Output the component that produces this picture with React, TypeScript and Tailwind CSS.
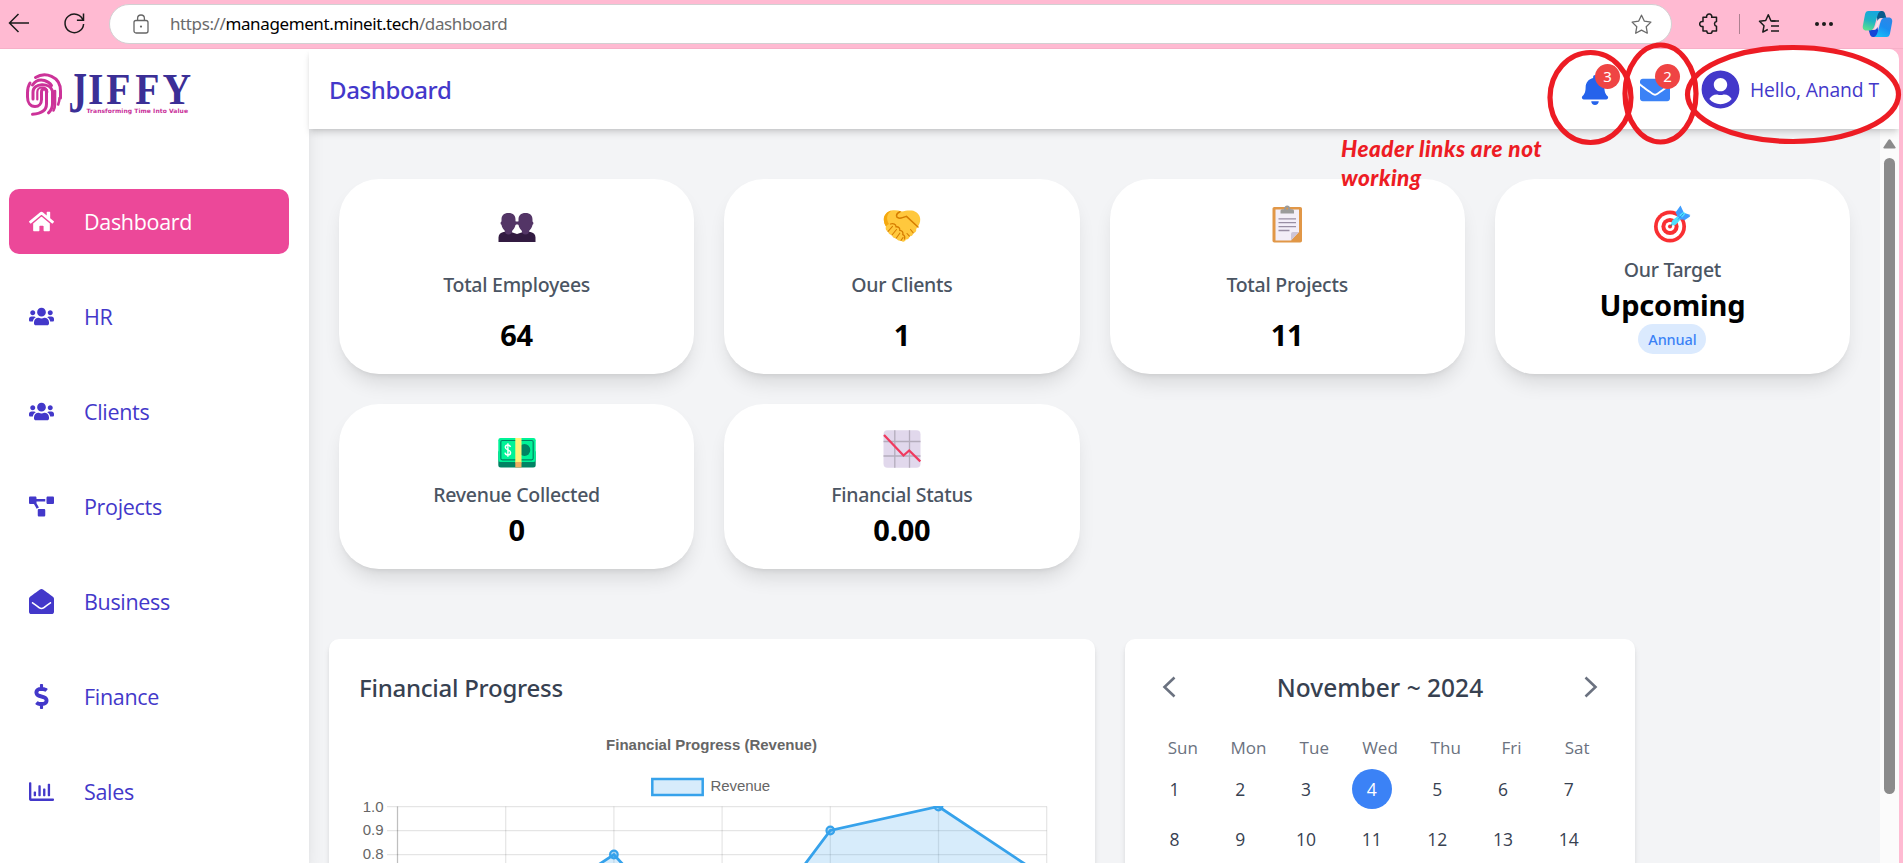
import type { ReactNode } from "react";
import {
  FaBell,
  FaDollarSign,
  FaEnvelope,
  FaEnvelopeOpen,
  FaHome,
  FaProjectDiagram,
  FaRegChartBar,
  FaUserCircle,
  FaUsers,
} from "react-icons/fa";

/* ---------- Browser toolbar ---------- */

function BrowserBar() {
  return (
    <div className="flex h-[49px] shrink-0 items-start border-b border-[#f7b0c8] bg-[#ffbad2]">
      <svg className="ml-[8px] mt-[13px] size-[22px]" viewBox="0 0 22 22" fill="none" stroke="#1b1b1b" strokeWidth="1.5">
        <path d="M21 10H2M10.5 1 1.5 10l9 9" />
      </svg>
      <svg className="ml-[33px] mt-[12px] size-[23px]" viewBox="0 0 23 23" fill="none" stroke="#1b1b1b" strokeWidth="1.5">
        <path d="M20.2 8.6A9.3 9.3 0 1 0 20.6 12" />
        <path d="M20.5 1.5v6.7h-6.6" />
      </svg>
      <div className="ml-[23px] mt-[4px] flex h-[40px] w-[1563px] items-center rounded-full border border-[#d2d0d2] bg-white">
        <svg className="ml-[23px] h-[20px] w-[16px]" viewBox="0 0 16 20" fill="none" stroke="#666" strokeWidth="1.3">
          <rect x="1" y="6.5" width="14" height="12.5" rx="2" />
          <path d="M4.6 6.5V4.4a3.4 3.4 0 0 1 6.8 0v2.1" />
          <circle cx="8" cy="12.6" r="1.1" fill="#666" stroke="none" />
        </svg>
        <p className="ml-[21px] text-[17px] leading-6 tracking-[-0.39px] text-[#6b6b6b]">
          https://<span className="text-black">management.mineit.tech</span>/dashboard
        </p>
        <svg className="ml-auto mr-[19px] size-[21px]" viewBox="0 0 21 21" fill="none" stroke="#6a6a6a" strokeWidth="1.3" strokeLinejoin="round">
          <path d="m10.5 1.2 2.9 6 6.5.9-4.7 4.6 1.1 6.5-5.8-3.1-5.8 3.1 1.1-6.5L1.1 8.1l6.5-.9z" />
        </svg>
      </div>
      <svg className="ml-[27px] mt-[13px] size-[21px]" viewBox="0 0 21 21" fill="none" stroke="#1b1b1b" strokeWidth="1.5" strokeLinejoin="round">
        <path d="M4 4.3h3.7a2.6 2.6 0 1 1 5 0H17.5v4.1a2.5 2.5 0 0 0 0 4.9v4.6h-4.3a2.7 2.7 0 0 1-5.4 0H4v-4.4a2.6 2.6 0 1 1 0-5z" />
      </svg>
      <div className="ml-[19px] mt-[14px] h-[20px] w-px bg-[#ad8090]" />
      <svg className="ml-[18px] mt-[13px] size-[22px]" viewBox="0 0 22 22" fill="none" stroke="#1b1b1b" strokeWidth="1.5" strokeLinejoin="round">
        <path d="M17.5 8H13L10.3 1.7 7.7 7.5l-6.2.8 4.5 4.5-1.2 6.3 5-2.6" />
        <path d="M13.5 8H21M13 13h8M13 18h8" />
      </svg>
      <div className="ml-[35px] mt-[22px] flex gap-[3.5px]">
        <span className="size-[3.5px] rounded-full bg-[#1b1b1b]" />
        <span className="size-[3.5px] rounded-full bg-[#1b1b1b]" />
        <span className="size-[3.5px] rounded-full bg-[#1b1b1b]" />
      </div>
      <svg className="ml-[29px] mt-[10px] h-[28px] w-[31px]" viewBox="0 0 31 28">
        <defs>
          <linearGradient id="cpL" x1="0.6" y1="0" x2="0.3" y2="1">
            <stop offset="0" stopColor="#16a6e0" />
            <stop offset="0.5" stopColor="#1fb3c4" />
            <stop offset="1" stopColor="#5be08e" />
          </linearGradient>
          <linearGradient id="cpR" x1="0.8" y1="0" x2="0.3" y2="1">
            <stop offset="0" stopColor="#2f86e6" />
            <stop offset="0.5" stopColor="#1b8df0" />
            <stop offset="1" stopColor="#18bdf8" />
          </linearGradient>
        </defs>
        <path d="M17 6.5h3L14.5 21h-3z" fill="#fbdfe9" />
        <path d="M14 1h6c2 0 2.7 1.5 3.3 3.5l1 3.5h-5c-2 0-3 1-3.8 3z" fill="#0b5a8c" />
        <path d="M17 27h-6c-2 0-2.7-1.5-3.3-3.5L6.7 20h5c2 0 3-1 3.8-3z" fill="#1546d6" />
        <path d="M6.5 1H19c-2 .5-2.9 2.5-3.5 4.5L12.5 16c-1 3.2-2.5 4.5-5 4.5h-3C1 20.5.3 18 1 15L3 4.5C3.5 2 4.5 1 6.5 1z" fill="url(#cpL)" />
        <path d="M24.5 27H12c2-.5 2.9-2.5 3.5-4.5L18.5 12c1-3.2 2.5-4.5 5-4.5h3c3.5 0 4.2 2.5 3.5 5.5L28 23.5c-.5 2.5-1.5 3.5-3.5 3.5z" fill="url(#cpR)" />
      </svg>
    </div>
  );
}

/* ---------- Sidebar ---------- */

function Logo() {
  return (
    <svg className="ml-[24px] mt-[1px] h-[80px] w-[170px] shrink-0 overflow-visible" viewBox="24 50 170 80">
      <g fill="none" stroke="#cc3399" strokeWidth="3" strokeLinecap="round">
        <path d="M35.5 77.5C45 71.5 60.5 76 60.5 91v7" />
        <path d="M30 83c-2 3-2.5 6-2.5 10v4c0 5 2.5 9.5 7.5 9.5 4 0 6.5-3 6.5-7V92c0-4 5-4 5 0v12c0 5-3.5 9.5-14 10.3" />
        <path d="M32.5 85c3-4.5 8-5.5 12-4.5 3 .8 5.5 2.5 7 5" />
        <path d="M33 99v-7c0-9 17-10 19.5-1V104c0 3.5-1.5 6.5-4 8.8" />
        <path d="M37.3 99.5V92c0-6 10-6 10 0" strokeWidth="2.2" />
        <path d="M55 91v13.5c0 2.5-.5 4-1.5 6M59.5 98c0 2.5-.5 4.5-1.3 6.500" strokeWidth="2.6" />
      </g>
      <g fill="#3b2f96" className="font-['Liberation_Serif',serif] font-bold">
        <text transform="translate(68.5 112) scale(0.66 1)" fontSize="56">
          J
        </text>
        <text transform="scale(0.88 1)" x="99.9 120.7 153.6 184.6" y="104.5" fontSize="45">
          IFFY
        </text>
      </g>
      <text
        x="86.5"
        y="113.2"
        fontSize="6"
        textLength="101.5"
        fill="#c9309a"
        className="font-['DejaVu_Sans',sans-serif] font-bold"
      >
        Transforming Time Into Value
      </text>
    </svg>
  );
}

const NAV: { label: string; icon: ReactNode; active?: boolean }[] = [
  { label: "Dashboard", icon: <FaHome size={25} />, active: true },
  { label: "HR", icon: <FaUsers size={25} /> },
  { label: "Clients", icon: <FaUsers size={25} /> },
  { label: "Projects", icon: <FaProjectDiagram size={25} /> },
  { label: "Business", icon: <FaEnvelopeOpen size={25} /> },
  { label: "Finance", icon: <FaDollarSign size={25} /> },
  { label: "Sales", icon: <FaRegChartBar size={25} /> },
];

function Sidebar() {
  return (
    <aside className="z-10 flex w-[309px] shrink-0 flex-col bg-white shadow-[0_12px_19px_-4px_rgba(0,0,0,0.12),0_5px_8px_-5px_rgba(0,0,0,0.1)]">
      <Logo />
      <nav className="ml-[9px] mt-[59px] flex w-[280px] flex-col gap-[30px]">
        {NAV.map((n) => (
          <a
            key={n.label}
            className={
              n.active
                ? "flex h-[65px] items-center gap-[30px] rounded-[10px] bg-[#ec4899] pl-[20px] text-white"
                : "flex h-[65px] items-center gap-[30px] rounded-[10px] pl-[20px] text-[#4338ca]"
            }
          >
            {n.icon}
            <span className="font-['Open_Sans',sans-serif] text-[21.5px] leading-[30px] tracking-[-0.32px]">{n.label}</span>
          </a>
        ))}
      </nav>
    </aside>
  );
}

/* ---------- Header ---------- */

function Badge({ children }: { children: ReactNode }) {
  return (
    <span className="absolute -top-[10.5px] left-[15px] flex size-[25px] items-center justify-center rounded-full bg-[#ef4444] text-[15px] leading-none text-white">
      {children}
    </span>
  );
}

function Header() {
  return (
    <header className="z-20 flex h-[80px] shrink-0 items-center rounded-tr-[10px] bg-white pl-[20px] pr-[20px] pt-px shadow-[0_5px_7px_-1px_rgba(0,0,0,0.13),0_2px_5px_-2px_rgba(0,0,0,0.12)]">
      <h1 className="text-[24px] font-medium leading-[35px] tracking-[-0.38px] text-[#4338ca]">Dashboard</h1>
      <div className="ml-auto flex items-center text-[#4338ca]">
        <span className="relative mr-[30px] flex w-[30px] justify-center text-[#2563eb]">
          <FaBell size={30} />
          <Badge>3</Badge>
        </span>
        <span className="relative mr-[31px] text-[#3b82f6]">
          <FaEnvelope size={30} />
          <Badge>2</Badge>
        </span>
        <FaUserCircle size={39} />
        <span className="ml-[10px] mt-px w-[129px] whitespace-nowrap font-['Open_Sans',sans-serif] text-[19.3px] leading-[30px] tracking-[-0.1px]">
          Hello, Anand T
        </span>
      </div>
    </header>
  );
}

/* ---------- Card pictograms ---------- */

const ICON = "size-[38px] shrink-0";

function PeopleIcon() {
  return (
    <svg className={ICON} viewBox="0 0 38 38">
      <path d="M.5 37v-4.5c0-3 2-5 5-5.5l4.5-1 9 3 9-3 4.5 1c3 .5 5 2.5 5 5.5V37z" fill="#321b41" />
      <g fill="#533566">
        <path d="M6.8 22.5h7.4v3.3a3.7 3.7 0 0 1-7.4 0zM23.8 22.5h7.4v3.3a3.7 3.7 0 0 1-7.4 0z" />
        <path d="M10.5 8c4.7 0 7 2.5 7 6.5v2c1 .3 1 3 0 3.2-.7 4.2-3.5 7-7 7s-6.3-2.8-7-7c-1.2-.3-1.2-2.8 0-3.2v-2c0-4 2.3-6.5 7-6.5z" />
        <path d="M27.5 8c4.7 0 7 2.5 7 6.5v2c1.2.4 1.2 2.9 0 3.2-.7 4.2-3.5 7-7 7s-6.3-2.8-7-7c-1-.2-1-2.9 0-3.2v-2c0-4 2.3-6.5 7-6.5z" />
        <path d="M17 16.5h4v3h-4z" />
      </g>
    </svg>
  );
}

function HandshakeIcon() {
  return (
    <svg className={ICON} viewBox="0 0 38 38">
      <path d="M8.5 5.5C4 6.5.8 10 .8 14.5c0 3 1 5 2.2 7C2 23.5 3 26 5 26.5c.3 2.3 2 3.5 4 3.5.4 2.3 2.2 3.5 4.2 3.2.8 2 2.8 3 4.8 2.3 1.8 2 4.3 1.3 4.8-1 2.2.3 3.7-1.2 3.7-3.2 2.3.3 3.8-1.3 3.6-3.3 2.3 0 3.6-1.8 3.1-4 2.8-3.5 4.3-6.5 4-10-.3-4.5-4-8-8.5-8.5-3.5-.4-7 .3-9.7 1-3.5-1-7-1.7-10.5-1z" fill="#ffc83d" />
      <path d="M8.5 5.5C4 6.5.8 10 .8 14.5c0 3 1 5 2.2 7 1-1 2-2 3-2.5C3 14 3.5 9 8.5 5.5z" fill="#f5a80f" />
      <g fill="none" stroke="#d67d00" strokeLinecap="round">
        <path d="M17 6.8c-2 .8-3.5 2-3.5 4 0 2.5 3.5 2.8 6 1.8l4-1.2L35 22" strokeWidth="1.5" />
        <path d="M7.5 19c3-1 5.5.5 5.5 2.8 2.5-.3 4 1.2 3.8 3.5 2.4.2 3.6 2 3 4.3 1.5.6 2.2 2.5 1.7 4.4" strokeWidth="1.3" />
        <path d="m5 26.5 4.5-5.2M9 30l4.5-5.5M13.2 33.2l3.6-5M18 35.5l2-3M24 28.5l2.4 2.7M27.5 24.5l2.8 3.5" strokeWidth="1.1" />
      </g>
    </svg>
  );
}

function ClipboardIcon() {
  return (
    <svg className={ICON} viewBox="0 0 38 38">
      <rect x="4.5" y="2" width="29.5" height="35.5" rx="1.8" fill="#e19747" />
      <path d="M7.5 4.5H31V27l-8 8.5H7.5z" fill="#f3eef8" />
      <path d="M31 27h-6a2 2 0 0 0-2 2v6.5z" fill="#cdc4d6" />
      <path d="M31 27.5V35.5h-7.5z" fill="#e19747" />
      <path d="M12.5 8.5V6c0-1 .8-1.8 1.8-1.8h1.8C16.2 2 17.4.6 19.2.6S22.3 2 22.4 4.2h1.8c1 0 1.8.8 1.8 1.8v2.5z" fill="#9b9b9b" />
      <circle cx="19.2" cy="3.6" r="1" fill="#e19747" />
      <path d="M10.5 13.8h17.5M10.5 17.7h17.5M10.5 21.6h17.5M10.5 25.5h11" stroke="#998ea4" strokeWidth="1.3" />
    </svg>
  );
}

function TargetIcon() {
  return (
    <svg className={ICON} viewBox="0 0 38 38">
      <circle cx="17" cy="21.5" r="16" fill="#f92f32" />
      <circle cx="17" cy="21.5" r="12.3" fill="#fff" />
      <circle cx="17" cy="21.5" r="8.6" fill="#f92f32" />
      <circle cx="17" cy="21.5" r="4.6" fill="#fff" />
      <circle cx="17" cy="21.5" r="2" fill="#f92f32" />
      <path d="m17.5 21 6-6" stroke="#5b6f80" strokeWidth="1.5" />
      <path d="M22.5 7.5 27.5.5l3 6.5-4 7zM30 14.5l7.5-4.5-6-2-6 5z" fill="#3f9dff" />
      <path d="m30.5 6.8 2.2 1.7L23.5 19c-1.2 1.3-3.8 1.6-4.8.7-.8-1-.2-3.4 1-4.7z" fill="#4fe0ff" />
      <path d="m24 9.5 5.5 4.7M30.5 14.7l6-4" stroke="#3f9dff" strokeWidth="2" />
      <path d="m25 14.5 5.5-6" stroke="#2b8fe8" strokeWidth="1" />
    </svg>
  );
}

function MoneyIcon() {
  return (
    <svg className={ICON} viewBox="0 0 38 38">
      <rect x=".3" y="20" width="37.4" height="17.5" rx="2.5" fill="#008463" />
      <rect x=".3" y="8" width="37.4" height="24" rx="2.2" fill="#00f397" />
      <rect x="2.8" y="10.5" width="32.4" height="19.3" rx="1.5" fill="none" stroke="#008463" strokeWidth="1.2" />
      <ellipse cx="26.5" cy="20" rx="5.8" ry="6" fill="#008463" />
      <path d="M17.3 8h6.2v24.5h-6.2z" fill="#fff27a" />
      <path d="M17.3 32h6.2v5.5h-6.2z" fill="#f3ad61" />
      <path d="M12.5 17c-.3-1.3-1.3-2-2.6-2-1.5 0-2.6.9-2.6 2.3 0 3 5.3 2 5.3 5.2 0 1.5-1.2 2.5-2.7 2.5s-2.7-.8-2.9-2.3M9.9 13.2v13.6" fill="none" stroke="#fff" strokeWidth="1.4" />
    </svg>
  );
}

function DownChartIcon() {
  return (
    <svg className={ICON} viewBox="0 0 38 38">
      <rect x=".5" y=".3" width="37" height="37.4" rx="4" fill="#e1d8ec" />
      <path d="M11.8.3v37.4M26.5.3v37.4M.5 11.5h37M.5 26h37" stroke="#b4acbc" strokeWidth="1.3" />
      <path d="m1 5 19.5 20.5 5.7-5L37.3 31.5" fill="none" stroke="#f03a5f" strokeWidth="2.3" />
    </svg>
  );
}

/* ---------- Stat cards ---------- */

function StatCard({
  icon,
  label,
  value,
  tag,
  spacious = false,
}: {
  icon: ReactNode;
  label: string;
  value: string;
  tag?: string;
  spacious?: boolean;
}) {
  return (
    <div className="flex flex-col items-center rounded-[40px] bg-white pt-[26px] shadow-[0_12.5px_19px_-4px_rgba(0,0,0,0.11),0_5px_7.5px_-5px_rgba(0,0,0,0.12)]">
      {icon}
      <h2
        className={
          spacious
            ? "mt-[27px] text-[19.5px] font-medium leading-[30px] tracking-[-0.26px] text-[#4b5563]"
            : "mt-[12px] text-[19.5px] font-medium leading-[30px] tracking-[-0.3px] text-[#4b5563]"
        }
      >
        {label}
      </h2>
      <p
        className={
          spacious
            ? "mt-[15px] text-[29px] font-bold leading-[40px] tracking-[-0.2px] text-black"
            : "text-[29px] font-bold leading-[40px] tracking-[-0.2px] text-black"
        }
      >
        {value}
      </p>
      {tag && (
        <span className="-mt-px rounded-full bg-[#dbeafe] px-[10px] text-[14.5px] font-medium leading-[30px] tracking-[-0.15px] text-[#3b82f6]">
          {tag}
        </span>
      )}
    </div>
  );
}

/* ---------- Revenue chart ---------- */

const LEFT = 397.5;
const STEP = 108.2;
const TOP = 806.5;
const UNIT = 240;
const REVENUE = [0.2, 0.5, 0.8, 0.3, 0.9, 1, 0.7];
const POINTS = REVENUE.map((v, i) => [LEFT + i * STEP, TOP + (1 - v) * UNIT]);
const LINE = POINTS.map(([x, y]) => `${x},${y}`).join(" ");

function RevenueChart() {
  return (
    <svg className="mt-[25px] h-[140px] w-[706px]" viewBox="359 730 706 140" overflow="hidden">
      <defs>
        <clipPath id="plot">
          <rect x={LEFT} y={TOP - 0.5} width={STEP * 6} height={UNIT} />
        </clipPath>
      </defs>
      <g className="font-['Liberation_Sans',sans-serif] text-[15px]" fill="#666">
        <text x="711.5" y="750" textAnchor="middle" className="font-bold">
          Financial Progress (Revenue)
        </text>
        <rect x="652.3" y="779" width="50.4" height="16" fill="#d7ecfb" stroke="#36a2eb" strokeWidth="2.5" />
        <text x="710.5" y="791" textLength="59.5">
          Revenue
        </text>
        {["1.0", "0.9", "0.8"].map((t, i) => (
          <text key={t} x="383.5" y={811.5 + i * 23.7} textAnchor="end">
            {t}
          </text>
        ))}
      </g>
      <g stroke="#000" strokeOpacity="0.1" strokeWidth="1.25">
        {[0, 1, 2].map((i) => (
          <line key={i} x1="387" x2={LEFT + STEP * 6} y1={TOP + i * 24} y2={TOP + i * 24} />
        ))}
        {POINTS.map(([x], i) => (
          <line key={i} x1={x} x2={x} y1={TOP} y2="870" strokeOpacity={i === 0 ? 0.25 : 0.1} />
        ))}
      </g>
      <g clipPath="url(#plot)">
        <polygon
          points={`${LINE} ${LEFT + STEP * 6},${TOP + UNIT} ${LEFT},${TOP + UNIT}`}
          fill="#36a2eb"
          fillOpacity="0.2"
        />
        <polyline points={LINE} fill="none" stroke="#36a2eb" strokeWidth="2.8" />
        {POINTS.map(([x, y], i) => (
          <circle key={i} cx={x} cy={y} r="3.8" fill="#36a2eb" fillOpacity="0.4" stroke="#36a2eb" strokeWidth="2.2" />
        ))}
      </g>
    </svg>
  );
}

/* ---------- Calendar ---------- */

const WEEKDAYS = ["Sun", "Mon", "Tue", "Wed", "Thu", "Fri", "Sat"];
const DAYS = Array.from({ length: 14 }, (_, i) => i + 1);

function Calendar() {
  return (
    <section className="h-[300px] w-[510px] rounded-[10px] bg-white pl-[30px] pr-[30px] pt-[28px] shadow-[0_5px_7px_-1px_rgba(0,0,0,0.1),0_2px_5px_-2px_rgba(0,0,0,0.1)]">
      <div className="flex h-[40px] items-center justify-between px-[7px] text-[#6b7280]">
        <svg className="h-[22px] w-[14px]" viewBox="0 0 14 22" fill="none" stroke="currentColor" strokeWidth="2.6">
          <path d="m12.5 1.5-10 9.5 10 9.5" />
        </svg>
        <h2 className="text-[24.5px] font-medium leading-[35px] tracking-[0.02px] text-[#374151]">November ~ 2024</h2>
        <svg className="h-[22px] w-[14px]" viewBox="0 0 14 22" fill="none" stroke="currentColor" strokeWidth="2.6">
          <path d="m1.5 1.5 10 9.5-10 9.5" />
        </svg>
      </div>
      <div className="mt-[26px] grid w-[450px] grid-cols-7 gap-x-[10px] text-center font-['Open_Sans',sans-serif] text-[17px] leading-[30px] text-[#6b7280]">
        {WEEKDAYS.map((d) => (
          <span key={d}>{d}</span>
        ))}
      </div>
      <div className="mt-[6px] grid w-[450px] grid-cols-7 gap-[10px] font-['Open_Sans',sans-serif] text-[17.5px] text-[#374151]">
        {DAYS.map((d) => (
          <span
            key={d}
            className={
              d === 4
                ? "flex size-[40px] items-center justify-center rounded-full bg-[#3b82f6] pt-px pr-px text-white"
                : "flex size-[40px] items-center justify-center rounded-full pt-px pr-px"
            }
          >
            {d}
          </span>
        ))}
      </div>
    </section>
  );
}

/* ---------- Vertical scrollbar ---------- */

function Scrollbar() {
  return (
    <div className="flex w-[19px] shrink-0 flex-col items-center bg-[#fbfbfb] pt-[10px]">
      <svg className="h-[10px] w-[13px]" viewBox="0 0 13 10">
        <path d="M5.3 1a1.5 1.5 0 0 1 2.4 0l4.8 7.2c.5.9 0 1.3-.9 1.3H1.4C.5 9.5 0 9.1.5 8.2z" fill="#8b8b8b" />
      </svg>
      <div className="mt-[9px] h-[636px] w-[11px] rounded-full bg-[#8b8b8b]" />
    </div>
  );
}

/* ---------- Review markup laid over the page ---------- */

function Annotations() {
  return (
    <>
      <svg className="pointer-events-none absolute left-0 top-0 z-30 h-[863px] w-[1903px]" viewBox="0 0 1903 863" fill="none" stroke="#ed1c24" strokeWidth="5.2">
        <ellipse cx="1590.5" cy="97.5" rx="40.5" ry="45" />
        <ellipse cx="1660.5" cy="93.5" rx="35.5" ry="48.5" />
        <ellipse cx="1793" cy="94.5" rx="105.5" ry="47" />
      </svg>
      <p className="absolute left-[1341px] top-[134px] z-30 w-[230px] font-['Lato',sans-serif] text-[22.5px] font-black italic leading-[29px] tracking-[0.5px] text-[#ed1c24]">
        Header links are not working
      </p>
    </>
  );
}

export default function App() {
  return (
    <div className="relative flex h-[863px] w-[1903px] flex-col overflow-hidden bg-[#ffbad2] font-['Noto_Sans',sans-serif]">
      <BrowserBar />
      <div className="mr-[4px] flex min-h-0 flex-1 overflow-hidden rounded-tr-[10px] bg-white">
        <Sidebar />
        <div className="flex min-w-0 flex-1 flex-col">
          <Header />
          <div className="flex min-h-0 flex-1">
            <main className="min-w-0 flex-1 overflow-hidden bg-[#f3f4f6]">
              <div className="ml-[30px] mt-[50px] grid w-[1511px] grid-cols-4 grid-rows-[195px_165px] gap-[30px]">
                <StatCard spacious icon={<PeopleIcon />} label="Total Employees" value="64" />
                <StatCard spacious icon={<HandshakeIcon />} label="Our Clients" value="1" />
                <StatCard spacious icon={<ClipboardIcon />} label="Total Projects" value="11" />
                <StatCard icon={<TargetIcon />} label="Our Target" value="Upcoming" tag="Annual" />
                <StatCard icon={<MoneyIcon />} label="Revenue Collected" value="0" />
                <StatCard icon={<DownChartIcon />} label="Financial Status" value="0.00" />
              </div>
              <div className="ml-[20px] mt-[70px] flex gap-[30px]">
                <section className="h-[300px] w-[766px] rounded-[10px] bg-white px-[30px] pt-[31px] shadow-[0_5px_7px_-1px_rgba(0,0,0,0.1),0_2px_5px_-2px_rgba(0,0,0,0.1)]">
                  <h2 className="text-[24px] font-medium leading-[35px] tracking-[-0.25px] text-[#374151]">
                    Financial Progress
                  </h2>
                  <RevenueChart />
                </section>
                <Calendar />
              </div>
            </main>
            <Scrollbar />
          </div>
        </div>
      </div>
      <Annotations />
    </div>
  );
}
